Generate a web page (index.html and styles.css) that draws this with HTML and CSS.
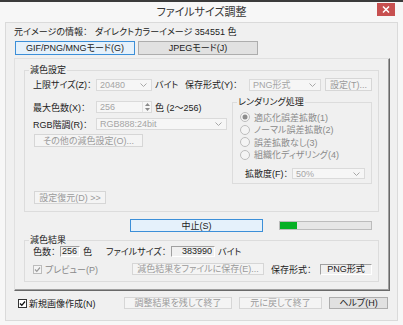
FILE: index.html
```html
<!DOCTYPE html>
<html lang="ja">
<head>
    <meta charset="UTF-8">
    <title>ファイルサイズ調整</title>
    <link rel="stylesheet" href="styles.css">
</head>
<body>
<div class="window">
    <div class="titlebar">
        <span></span>
        <span class="title">ファイルサイズ調整</span>
        <span class="close">
            <svg width="8" height="7" viewBox="0 0 8 7"><path d="M1 0.5L7 6.5M7 0.5L1 6.5" stroke="#fff" stroke-width="1.5"/></svg>
        </span>
    </div>

    <div class="client">
        <div class="info">
            <span class="info-label">元イメージの情報：</span>
            <span>ダイレクトカラーイメージ 354551 色</span>
        </div>

        <div class="tabs">
            <div class="btn btn-focus tab">GIF/PNG/MNGモード(G)</div>
            <div class="btn tab">JPEGモード(J)</div>
        </div>

        <div class="panel">
            <!-- 減色設定 -->
            <fieldset class="group group-reduce">
                <legend>減色設定</legend>
                <div class="row row-limit">
                    <span class="lbl w63">上限サイズ(Z)：</span>
                    <div class="combo w56"><span>20480</span><svg class="chev" width="7" height="4" viewBox="0 0 7 4"><polyline points="0.5,0.5 3.5,3.5 6.5,0.5" fill="none" stroke="#a8a8a8"/></svg></div>
                    <span class="lbl w30 ml3">バイト</span>
                    <span class="lbl w64">保存形式(Y)：</span>
                    <div class="combo w72"><span>PNG形式</span><svg class="chev" width="7" height="4" viewBox="0 0 7 4"><polyline points="0.5,0.5 3.5,3.5 6.5,0.5" fill="none" stroke="#a8a8a8"/></svg></div>
                    <div class="btn btn-off btn-setting">設定(T)...</div>
                </div>

                <div class="middle">
                    <div class="left-col">
                        <div class="row row-colors">
                            <span class="lbl w63">最大色数(X)：</span>
                            <div class="spin w56">
                                <span class="spin-value">256</span>
                                <span class="spin-arrows">
                                    <svg width="5" height="3" viewBox="0 0 5 3"><polygon points="0,3 2.5,0 5,3" fill="#8a8a8a"/></svg>
                                    <svg width="5" height="3" viewBox="0 0 5 3"><polygon points="0,0 2.5,3 5,0" fill="#8a8a8a"/></svg>
                                </span>
                            </div>
                            <span class="lbl ml3">色 (2〜256)</span>
                        </div>
                        <div class="row row-rgb">
                            <span class="lbl w63">RGB階調(R)：</span>
                            <div class="combo w131"><span>RGB888:24bit</span><svg class="chev" width="7" height="4" viewBox="0 0 7 4"><polyline points="0.5,0.5 3.5,3.5 6.5,0.5" fill="none" stroke="#a8a8a8"/></svg></div>
                        </div>
                        <div class="btn btn-off btn-other">その他の減色設定(O)...</div>
                    </div>

                    <fieldset class="group group-render">
                        <legend>レンダリング処理</legend>
                        <div class="radio">
                            <svg width="10" height="10" viewBox="0 0 10 10"><circle cx="5" cy="5" r="4.5" fill="#f4f4f4" stroke="#bcbcbc"/><circle cx="5" cy="5" r="2.5" fill="#8c8c8c"/></svg>
                            <span>適応化誤差拡散(1)</span>
                        </div>
                        <div class="radio">
                            <svg width="10" height="10" viewBox="0 0 10 10"><circle cx="5" cy="5" r="4.5" fill="#f4f4f4" stroke="#bcbcbc"/></svg>
                            <span>ノーマル誤差拡散(2)</span>
                        </div>
                        <div class="radio">
                            <svg width="10" height="10" viewBox="0 0 10 10"><circle cx="5" cy="5" r="4.5" fill="#f4f4f4" stroke="#bcbcbc"/></svg>
                            <span>誤差拡散なし(3)</span>
                        </div>
                        <div class="radio">
                            <svg width="10" height="10" viewBox="0 0 10 10"><circle cx="5" cy="5" r="4.5" fill="#f4f4f4" stroke="#bcbcbc"/></svg>
                            <span>組織化ディザリング(4)</span>
                        </div>
                        <div class="row row-spread">
                            <span class="lbl w47">拡散度(F)：</span>
                            <div class="combo w73"><span>50%</span><svg class="chev" width="7" height="4" viewBox="0 0 7 4"><polyline points="0.5,0.5 3.5,3.5 6.5,0.5" fill="none" stroke="#a8a8a8"/></svg></div>
                        </div>
                    </fieldset>
                </div>

                <div class="btn btn-off btn-restore">設定復元(D) &gt;&gt;</div>
            </fieldset>

            <div class="progress-row">
                <div class="btn btn-focus btn-stop">中止(S)</div>
                <div class="progress"><div class="progress-fill" style="width: 17px"></div></div>
            </div>

            <!-- 減色結果 -->
            <fieldset class="group group-result">
                <legend>減色結果</legend>
                <div class="row row-result">
                    <span class="lbl w27">色数：</span>
                    <span class="field w20">256</span>
                    <span class="lbl ml3">色</span>
                    <span class="lbl w65 ml14">ファイルサイズ：</span>
                    <span class="field w44">383990</span>
                    <span class="lbl ml3">バイト</span>
                </div>
                <div class="row row-save">
                    <span class="check check-off w99">
                        <svg width="9" height="9" viewBox="0 0 9 9"><rect x="0.5" y="0.5" width="8" height="8" fill="#f4f4f4" stroke="#bcbcbc"/><polyline points="2,4.5 3.8,6.3 7,2.5" fill="none" stroke="#9a9a9a" stroke-width="1.2"/></svg>
                        <span>プレビュー(P)</span>
                    </span>
                    <div class="btn btn-off btn-save">減色結果をファイルに保存(E)...</div>
                    <span class="lbl w49 ml7">保存形式：</span>
                    <span class="field field-center w52">PNG形式</span>
                </div>
            </fieldset>
        </div>

        <div class="footer">
            <span class="check">
                <svg width="9" height="9" viewBox="0 0 9 9"><rect x="0.5" y="0.5" width="8" height="8" fill="#fff" stroke="#333"/><polyline points="2,4.5 3.8,6.3 7,2.5" fill="none" stroke="#111" stroke-width="1.3"/></svg>
                <span>新規画像作成(N)</span>
            </span>
            <div class="footer-buttons">
                <div class="btn btn-off w108">調整結果を残して終了</div>
                <div class="btn btn-off w83">元に戻して終了</div>
                <div class="btn w59">ヘルプ(H)</div>
            </div>
        </div>
    </div>
</div>
</body>
</html>
```

FILE: styles.css
```css
* {
    box-sizing: border-box;
}

body {
    margin: 0;
    background-color: #3b3b3b;
    font-family: "Liberation Sans", "Noto Sans CJK JP", sans-serif;
    font-size: 9px;
    font-feature-settings: "palt";
    color: #222;
}

.window {
    margin-top: 2px;
    width: 403px;
    height: 323px;
    background-color: #f7f7f7;
}

.titlebar {
    height: 20px;
    display: grid;
    grid-template-columns: 1fr auto 1fr;
    align-items: start;
}

.title {
    font-size: 11px;
    line-height: 21px;
    color: #333;
}

.close {
    justify-self: end;
    margin: 1px 8px 0 0;
    width: 18px;
    height: 13px;
    background-color: #c75050;
    display: flex;
    align-items: center;
    justify-content: center;
}

.client {
    margin: 0 5px;
    height: 299px;
    background-color: #f0f0f0;
    border: 1px solid #dadada;
    padding: 2px 7px 0 8px;
}

.info {
    display: flex;
    height: 14px;
    line-height: 14px;
    white-space: nowrap;
}

.info-label {
    width: 81px;
}

.tabs {
    display: flex;
    gap: 3px;
    margin: 2px 0 0 1px;
}

.tab {
    width: 120px;
    height: 14px;
}

/* tab page */
.panel {
    margin-top: 3px;
    border: 1px solid;
    border-color: #e0e0e0 #696969 #696969 #e0e0e0;
    box-shadow: inset -1px -1px 0 #a0a0a0;
    padding: 5px 0 8px 9px;
}

.group {
    margin: 0;
    min-width: 0;
    border: 1px solid #dcdcdc;
}

.group legend {
    padding: 0 1px;
    height: 12px;
    line-height: 12px;
}

.group-reduce {
    width: 355px;
    padding: 2px 6px 7px 8px;
}

.group-reduce > legend,
.group-result > legend {
    margin-left: -4px;
}

.row {
    display: flex;
    align-items: center;
    white-space: nowrap;
}

.lbl {
    flex-shrink: 0;
}

.row-limit {
    height: 13px;
}

.middle {
    display: flex;
    align-items: flex-start;
    margin-top: 5px;
}

.left-col {
    width: 199px;
    padding-top: 5px;
}

.row-colors {
    height: 12px;
}

.row-rgb {
    height: 12px;
    margin-top: 5px;
}

.group-render {
    width: 140px;
    padding: 3px 4px 4px 7px;
}

.group-render > legend {
    margin-left: -3px;
}

.radio {
    display: flex;
    align-items: center;
    gap: 4px;
    height: 12.5px;
    color: #8a8a8a;
    white-space: nowrap;
}

.row-spread {
    height: 11px;
    margin-top: 7px;
    padding-left: 5px;
}

/* inputs */
.combo,
.spin {
    height: 12px;
    display: flex;
    align-items: center;
    justify-content: space-between;
    background-color: #f6f6f6;
    border: 1px solid #dadada;
    color: #a5a5a5;
    line-height: 10px;
    padding: 0 4px 0 3px;
}

.row-spread .combo {
    height: 11px;
}

.spin {
    padding-right: 0;
}

.spin-arrows {
    display: flex;
    flex-direction: column;
    justify-content: space-around;
    align-items: center;
    width: 9px;
    height: 100%;
    border-left: 1px solid #e2e2e2;
}

.field {
    height: 11px;
    line-height: 9px;
    border: 1px solid;
    border-color: #a0a0a0 #fff #fff #a0a0a0;
    text-align: right;
    padding-right: 2px;
}

.field-center {
    text-align: center;
    padding: 0;
}

.check {
    display: flex;
    align-items: center;
    gap: 2px;
    white-space: nowrap;
}

.check-off {
    gap: 3px;
    color: #8a8a8a;
}

/* buttons */
.btn {
    display: flex;
    align-items: center;
    justify-content: center;
    flex-shrink: 0;
    border: 1px solid #adadad;
    background-color: #e1e1e1;
    line-height: 10px;
    white-space: nowrap;
}

.btn-off {
    border-color: #d6d6d6;
    background-color: #f4f4f4;
    color: #9a9a9a;
}

.btn-focus {
    border-color: #3c8fd8;
    background-color: #e5f1fb;
}

.btn-setting {
    width: 47px;
    height: 13px;
    margin-left: 4px;
}

.btn-other {
    width: 109px;
    height: 13px;
    margin: 4px 0 0 1px;
}

.btn-restore {
    width: 72px;
    height: 13px;
    margin: 7px 0 0 1px;
}

.progress-row {
    display: flex;
    align-items: flex-start;
    margin-top: 7px;
}

.btn-stop {
    width: 133px;
    height: 13px;
    margin-left: 106px;
}

.progress {
    width: 93px;
    height: 9px;
    margin: 2px 0 0 16px;
    border: 1px solid #bcbcbc;
    background-color: #e6e6e6;
}

.progress-fill {
    height: 100%;
    background-color: #06b025;
}

.group-result {
    width: 355px;
    margin-top: 2px;
    padding: 0 6px 6px 8px;
}

.row-result {
    height: 11px;
}

.row-save {
    height: 12px;
    margin-top: 6px;
}

.btn-save {
    width: 132px;
    height: 12px;
}

.footer {
    display: flex;
    align-items: center;
    justify-content: space-between;
    height: 12px;
    margin-top: 6px;
    padding: 0 2px 0 4px;
}

.footer-buttons {
    display: flex;
    gap: 7px;
}

.footer-buttons .btn {
    height: 12px;
}

/* widths */
.w20 { width: 20px; }
.w27 { width: 27px; }
.w30 { width: 30px; }
.w44 { width: 44px; }
.w47 { width: 47px; }
.w49 { width: 49px; }
.w52 { width: 52px; }
.w56 { width: 56px; }
.w59 { width: 59px; }
.w63 { width: 63px; }
.w64 { width: 64px; }
.w65 { width: 65px; }
.w72 { width: 72px; }
.w73 { width: 73px; }
.w83 { width: 83px; }
.w99 { width: 99px; }
.w108 { width: 108px; }
.w131 { width: 131px; }

.ml3 { margin-left: 3px; }
.ml7 { margin-left: 7px; }
.ml14 { margin-left: 14px; }
```
